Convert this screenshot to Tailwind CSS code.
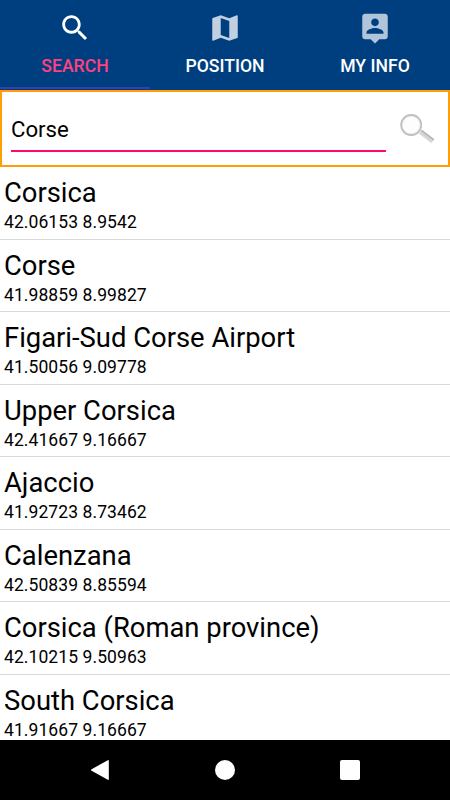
<!DOCTYPE html>
<html lang="en">
<head>
    <meta charset="UTF-8">
    <meta name="viewport" content="width=device-width, initial-scale=1.0">
    <title>Search</title>
    <script src="https://cdn.jsdelivr.net/npm/@tailwindcss/browser@4"></script>
</head>
<body class="bg-white text-black font-['Roboto',sans-serif]">
    <div class="w-[450px] h-[800px] flex flex-col overflow-hidden">

        <!-- Tabs -->
        <nav class="h-[90px] shrink-0 grid grid-cols-3 bg-[#003f7f] text-[17.6px] leading-5 font-medium text-white">
            <a href="#" class="flex flex-col items-center pt-[11px] text-[#ff4081]">
                <svg class="w-[34px] h-[34px] text-white" viewBox="0 0 24 24" fill="currentColor">
                    <path d="M15.5 14h-.79l-.28-.27C15.41 12.59 16 11.11 16 9.5 16 5.91 13.09 3 9.5 3S3 5.91 3 9.5 5.91 16 9.5 16c1.61 0 3.09-.59 4.23-1.57l.27.28v.79l5 4.99L20.49 19l-4.99-5zm-6 0C7.01 14 5 11.99 5 9.5S7.01 5 9.5 5 14 7.01 14 9.5 11.99 14 9.5 14z" />
                </svg>
                <span class="mt-[11px]">SEARCH</span>
                <span class="mt-auto w-full h-[3px] bg-[#3343a3] border-b border-[#10308c]"></span>
            </a>
            <a href="#" class="flex flex-col items-center pt-[11px]">
                <svg class="w-[34px] h-[34px] text-[#c1d0e0]" viewBox="0 0 24 24" fill="currentColor">
                    <path d="M20.5 3l-.16.03L15 5.1 9 3 3.36 4.9c-.21.07-.36.25-.36.48V20.5c0 .28.22.5.5.5l.16-.03L9 18.9l6 2.1 5.64-1.9c.21-.07.36-.25.36-.48V3.5c0-.28-.22-.5-.5-.5zM15 19l-6-2.11V5l6 2.11V19z" />
                </svg>
                <span class="mt-[11px]">POSITION</span>
            </a>
            <a href="#" class="flex flex-col items-center pt-[11px]">
                <svg class="w-[34px] h-[34px] text-[#b0c4da]" viewBox="0 0 24 24" fill="currentColor">
                    <path d="M19 2H5c-1.11 0-2 .9-2 2v14c0 1.1.89 2 2 2h4l3 3 3-3h4c1.1 0 2-.9 2-2V4c0-1.1-.9-2-2-2zm-7 3.3c1.49 0 2.7 1.21 2.7 2.7 0 1.49-1.21 2.7-2.7 2.7-1.49 0-2.7-1.21-2.7-2.7 0-1.49 1.21-2.7 2.7-2.7zM18 16H6v-.9c0-2 4-3.1 6-3.1s6 1.1 6 3.1v.9z" />
                </svg>
                <span class="mt-[11px]">MY INFO</span>
            </a>
        </nav>

        <!-- Search box -->
        <form class="h-[77px] shrink-0 flex items-start border-2 border-[#ff9e05] pl-[9px]">
            <input type="text" value="Corse" class="mt-[14px] w-[375px] h-[46px] pt-0.5 border-b-2 border-[#ff0a6c] text-[22.2px] outline-none">
            <button type="button" class="mt-5 ml-3">
                <svg class="w-10 h-9" viewBox="0 0 40 36" fill="none">
                    <defs>
                        <linearGradient id="handle" x1="30" y1="22.5" x2="27" y2="26.5" gradientUnits="userSpaceOnUse">
                            <stop offset="0" stop-color="#9f9f9f" />
                            <stop offset="0.35" stop-color="#cfcfcf" />
                            <stop offset="1" stop-color="#dedede" />
                        </linearGradient>
                    </defs>
                    <path d="M22.3 19.8L34.8 29.3" stroke="url(#handle)" stroke-width="5" />
                    <circle cx="13.2" cy="13" r="10" fill="#fdfdfd" stroke="#bdbdbd" stroke-width="1.8" />
                    <circle cx="13.2" cy="13" r="8.9" stroke="#e2e2e2" stroke-width="0.8" />
                </svg>
            </button>
        </form>

        <!-- Results -->
        <ul class="flex-1 min-h-0 overflow-hidden">
            <li class="h-[72.5px] px-1 pt-2.5 border-b border-[#dadada]">
                <p class="text-[27.4px] leading-8">Corsica</p>
                <p class="mt-[3px] text-[17.5px] leading-5 tracking-[0.08px]">42.06153 8.9542</p>
            </li>
            <li class="h-[72.5px] px-1 pt-2.5 border-b border-[#dadada]">
                <p class="text-[27.4px] leading-8">Corse</p>
                <p class="mt-[3px] text-[17.5px] leading-5 tracking-[0.08px]">41.98859 8.99827</p>
            </li>
            <li class="h-[72.5px] px-1 pt-2.5 border-b border-[#dadada]">
                <p class="text-[27.4px] leading-8">Figari-Sud Corse Airport</p>
                <p class="mt-[3px] text-[17.5px] leading-5 tracking-[0.08px]">41.50056 9.09778</p>
            </li>
            <li class="h-[72.5px] px-1 pt-2.5 border-b border-[#dadada]">
                <p class="text-[27.4px] leading-8">Upper Corsica</p>
                <p class="mt-[3px] text-[17.5px] leading-5 tracking-[0.08px]">42.41667 9.16667</p>
            </li>
            <li class="h-[72.5px] px-1 pt-2.5 border-b border-[#dadada]">
                <p class="text-[27.4px] leading-8">Ajaccio</p>
                <p class="mt-[3px] text-[17.5px] leading-5 tracking-[0.08px]">41.92723 8.73462</p>
            </li>
            <li class="h-[72.5px] px-1 pt-2.5 border-b border-[#dadada]">
                <p class="text-[27.4px] leading-8">Calenzana</p>
                <p class="mt-[3px] text-[17.5px] leading-5 tracking-[0.08px]">42.50839 8.85594</p>
            </li>
            <li class="h-[72.5px] px-1 pt-2.5 border-b border-[#dadada]">
                <p class="text-[27.4px] leading-8">Corsica (Roman province)</p>
                <p class="mt-[3px] text-[17.5px] leading-5 tracking-[0.08px]">42.10215 9.50963</p>
            </li>
            <li class="h-[72.5px] px-1 pt-2.5">
                <p class="text-[27.4px] leading-8">South Corsica</p>
                <p class="mt-[3px] text-[17.5px] leading-5 tracking-[0.08px]">41.91667 9.16667</p>
            </li>
        </ul>

        <!-- System navigation bar -->
        <div class="h-[60px] shrink-0 flex items-center justify-center gap-[105px] bg-black text-white">
            <svg class="w-5 h-5" viewBox="0 0 20 20" fill="currentColor">
                <path d="M17.8 0.2Q18.8 -0.2 18.8 1V19Q18.8 20.2 17.8 19.8L1.6 10.8Q0.4 10 1.6 9.2Z" />
            </svg>
            <span class="w-5 h-5 rounded-full bg-white"></span>
            <span class="w-5 h-5"><span class="block w-[19.5px] h-[19.5px] rounded-[2px] bg-white"></span></span>
        </div>
    </div>
</body>
</html>
